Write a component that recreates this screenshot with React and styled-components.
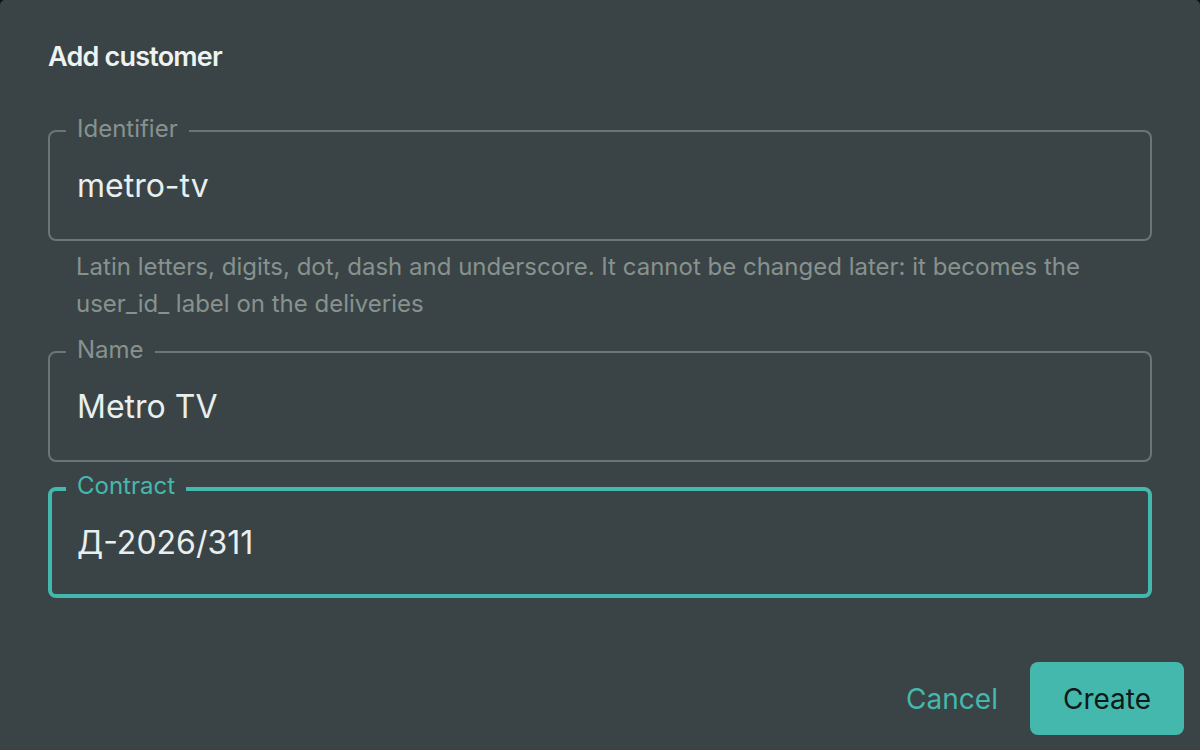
import React from "react";
import styled, { createGlobalStyle } from "styled-components";

const Global = createGlobalStyle`
  html, body { margin: 0; padding: 0; background: #0b0f10; }
  body { font-family: Inter, "Noto Sans", "Liberation Sans", sans-serif; overflow: hidden; }
  * { box-sizing: border-box; }
`;

const Dialog = styled.div`
  width: 1200px;
  min-height: 750px;
  background: #3a4446;
  border-radius: 5px 5px 0 0;
  display: flex;
  flex-direction: column;
`;

const Title = styled.h2`
  margin: 0;
  padding: 40px 48px 0;
  font-size: 27px;
  line-height: 34px;
  font-weight: 600;
  letter-spacing: -0.8px;
  color: #eef2f1;
`;

const Content = styled.div`
  padding: 56px 48px 0;
  display: flex;
  flex-direction: column;
`;

const FieldGroup = styled.div`
  display: flex;
  flex-direction: column;
  margin-top: ${(p) => p.$gap || 0}px;
`;

const Box = styled.div`
  position: relative;
  height: 111px;
  border-radius: 8px;
  border: ${(p) => (p.$focused ? "4px solid #45b8ad" : "2px solid #6a7577")};
  display: flex;
  align-items: center;
  padding: 0 ${(p) => (p.$focused ? 25 : 27)}px;
`;

const Label = styled.span`
  position: absolute;
  top: ${(p) => (p.$focused ? -17 : -15)}px;
  left: ${(p) => (p.$focused ? 14 : 16)}px;
  padding: 0 11px;
  background: #3a4446;
  font-size: 24px;
  line-height: 24px;
  color: ${(p) => (p.$focused ? "#45b8ad" : "#87928f")};
`;

const Value = styled.span`
  font-size: 32px;
  line-height: 40px;
  color: #e9efee;
`;

const Helper = styled.p`
  margin: 7px 28px 0;
  font-size: 24px;
  line-height: 37px;
  color: #87928f;
`;

const Actions = styled.div`
  display: flex;
  justify-content: flex-end;
  align-items: center;
  gap: 16px;
  padding: 64px 16px 16px;
`;

const Button = styled.button`
  height: 73px;
  padding: 0 ${(p) => (p.$primary ? 33 : 16)}px;
  border: none;
  border-radius: 8px;
  font-family: inherit;
  font-size: 28px;
  font-weight: 400;
  cursor: pointer;
  background: ${(p) => (p.$primary ? "#45b8ad" : "transparent")};
  color: ${(p) => (p.$primary ? "#0e1a19" : "#45b8ad")};
`;

function Field({ label, value, focused, helper, gap }) {
  return (
    <FieldGroup $gap={gap}>
      <Box $focused={focused}>
        <Label $focused={focused}>{label}</Label>
        <Value>{value}</Value>
      </Box>
      {helper && <Helper>{helper}</Helper>}
    </FieldGroup>
  );
}

export default function App() {
  return (
    <>
      <Global />
      <Dialog>
        <Title>Add customer</Title>
        <Content>
          <Field
            label="Identifier"
            value="metro-tv"
            helper="Latin letters, digits, dot, dash and underscore. It cannot be changed later: it becomes the user_id_ label on the deliveries"
          />
          <Field label="Name" value="Metro TV" gap={29} />
          <Field label="Contract" value="Д-2026/311" focused gap={25} />
        </Content>
        <Actions>
          <Button>Cancel</Button>
          <Button $primary>Create</Button>
        </Actions>
      </Dialog>
    </>
  );
}
